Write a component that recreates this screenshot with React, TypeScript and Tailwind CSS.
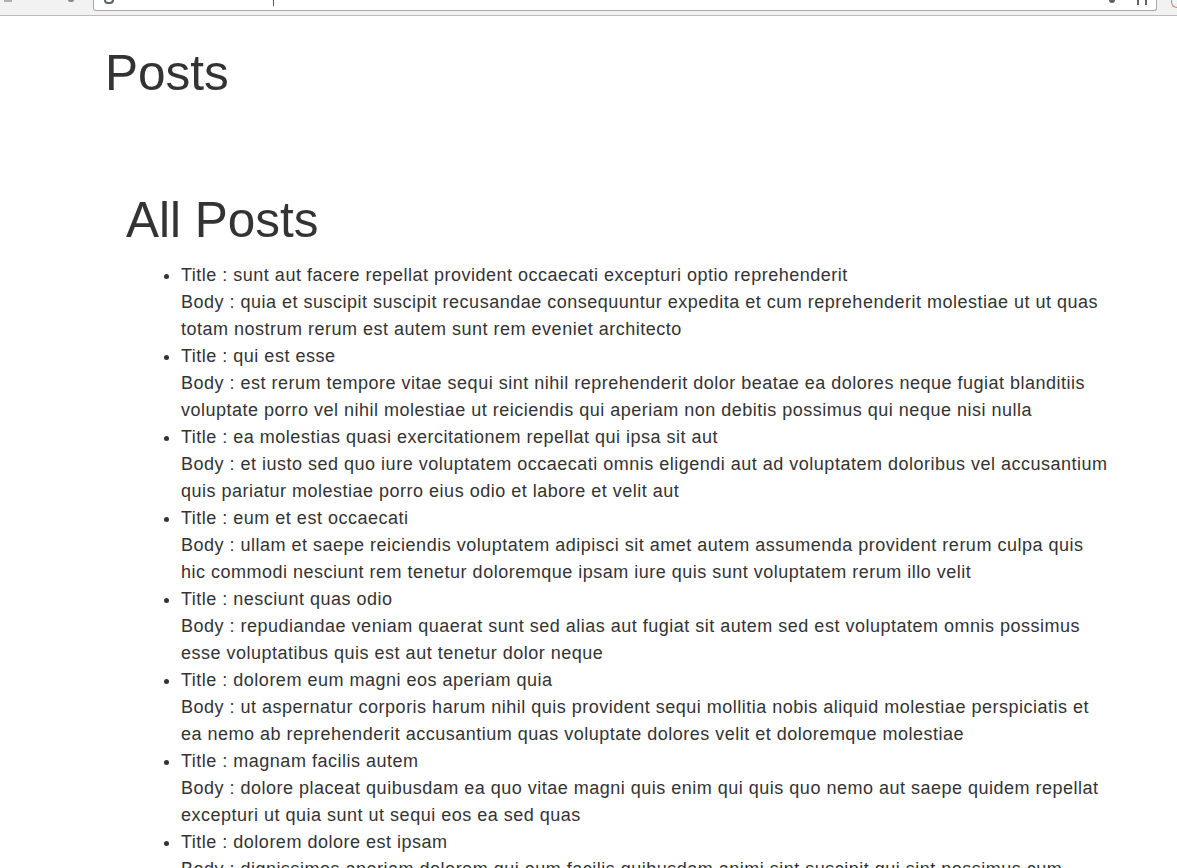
const posts = [
  {
    id: 1,
    title: "sunt aut facere repellat provident occaecati excepturi optio reprehenderit",
    body: "quia et suscipit\nsuscipit recusandae consequuntur expedita et cum\nreprehenderit molestiae ut ut quas totam\nnostrum rerum est autem sunt rem eveniet architecto",
  },
  {
    id: 2,
    title: "qui est esse",
    body: "est rerum tempore vitae\nsequi sint nihil reprehenderit dolor beatae ea dolores neque\nfugiat blanditiis voluptate porro vel nihil molestiae ut reiciendis\nqui aperiam non debitis possimus qui neque nisi nulla",
  },
  {
    id: 3,
    title: "ea molestias quasi exercitationem repellat qui ipsa sit aut",
    body: "et iusto sed quo iure\nvoluptatem occaecati omnis eligendi aut ad\nvoluptatem doloribus vel accusantium quis pariatur\nmolestiae porro eius odio et labore et velit aut",
  },
  {
    id: 4,
    title: "eum et est occaecati",
    body: "ullam et saepe reiciendis voluptatem adipisci\nsit amet autem assumenda provident rerum culpa\nquis hic commodi nesciunt rem tenetur doloremque ipsam iure\nquis sunt voluptatem rerum illo velit",
  },
  {
    id: 5,
    title: "nesciunt quas odio",
    body: "repudiandae veniam quaerat sunt sed\nalias aut fugiat sit autem sed est\nvoluptatem omnis possimus esse voluptatibus quis\nest aut tenetur dolor neque",
  },
  {
    id: 6,
    title: "dolorem eum magni eos aperiam quia",
    body: "ut aspernatur corporis harum nihil quis provident sequi\nmollitia nobis aliquid molestiae\nperspiciatis et ea nemo ab reprehenderit accusantium quas\nvoluptate dolores velit et doloremque molestiae",
  },
  {
    id: 7,
    title: "magnam facilis autem",
    body: "dolore placeat quibusdam ea quo vitae\nmagni quis enim qui quis quo nemo aut saepe\nquidem repellat excepturi ut quia\nsunt ut sequi eos ea sed quas",
  },
  {
    id: 8,
    title: "dolorem dolore est ipsam",
    body: "dignissimos aperiam dolorem qui eum\nfacilis quibusdam animi sint suscipit qui sint possimus cum\nquaerat magni maiores excepturi\nipsam ut commodi dolor voluptatum modi aut vitae",
  },
];

// sliver of the browser toolbar left at the top of the screenshot
const BrowserStrip = () => (
  <div className="flex h-[16px] items-start border-b border-[#bdbdbd] bg-[#f2f2f2]">
    <div className="ml-[4px] h-[2px] w-[8px] bg-[#b0b0b0]" />
    <div className="ml-[56px] h-[2px] w-[6px] rounded-b-full bg-[#8a8a8a]" />
    <div className="ml-[19px] flex h-[11px] flex-1 items-start rounded-b-[3px] border border-t-0 border-[#a9a9a9] bg-white">
      <div className="ml-[10px] h-[4px] w-[10px] rounded-b-full border-2 border-t-0 border-[#5f6368]" />
      <div className="ml-[159px] h-[6px] w-px bg-[#6b3fa0]" />
      <div className="flex-1" />
      <div className="h-[3px] w-[6px] rounded-b-full bg-[#5f6368]" />
      <div className="ml-[22px] mr-[9px] h-[5px] w-[10px] border-x-2 border-[#5f6368]" />
    </div>
    <div className="ml-[14px] h-[8px] w-[6px] rounded-bl-full border-b border-l border-[#e57373]" />
  </div>
);

const App = () => {
  return (
    <div className="min-h-screen bg-white font-['Liberation_Sans',Arial,sans-serif] text-[#333]">
      <BrowserStrip />

      <div className="pl-[105px] pt-[27px]">
        <h1 className="text-[49.5px] leading-[1.2] font-normal">Posts</h1>
      </div>

      <section className="mt-[88px] pl-[126px] pr-[66px]">
        <h2 className="text-[49.5px] leading-[1.2] font-normal">All Posts</h2>

        <ul className="mt-[12px] list-disc pl-[55px] text-[18px] leading-[27px] tracking-[0.5px]">
          {posts.map((post) => (
            <li key={post.id}>
              <div className="flex flex-col">
                <span>Title : {post.title}</span>
                <span>Body : {post.body.replace(/\n/g, " ")}</span>
              </div>
            </li>
          ))}
        </ul>
      </section>
    </div>
  );
};

export default App;
